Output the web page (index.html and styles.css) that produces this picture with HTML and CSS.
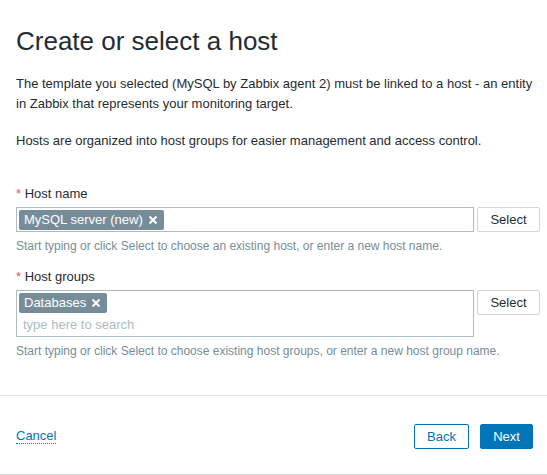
FILE: index.html
```html
<!DOCTYPE html>
<html lang="en">
<head>
<meta charset="utf-8">
<title>Create or select a host</title>
<link rel="stylesheet" href="styles.css">
</head>
<body>
<div class="dialog">
  <div class="content">
    <h1 class="title">Create or select a host</h1>
    <p class="text">The template you selected (MySQL by Zabbix agent 2) must be linked to a host - an entity in Zabbix that represents your monitoring target.</p>
    <p class="text">Hosts are organized into host groups for easier management and access control.</p>

    <div class="field field-first">
      <label class="label"><span class="req">*</span> Host name</label>
      <div class="row">
        <div class="ms ms-single">
          <span class="tag">MySQL server (new)<svg class="tag-x" viewBox="0 0 10 10" width="10" height="10"><path d="M1.5 1.5L8.5 8.5M8.5 1.5L1.5 8.5" stroke="#fff" stroke-width="2"/></svg></span>
        </div>
        <button class="btn-sec" type="button">Select</button>
      </div>
      <div class="hint">Start typing or click Select to choose an existing host, or enter a new host name.</div>
    </div>

    <div class="field">
      <label class="label"><span class="req">*</span> Host groups</label>
      <div class="row">
        <div class="ms ms-multi">
          <div class="tags"><span class="tag">Databases<svg class="tag-x" viewBox="0 0 10 10" width="10" height="10"><path d="M1.5 1.5L8.5 8.5M8.5 1.5L1.5 8.5" stroke="#fff" stroke-width="2"/></svg></span></div>
          <input class="ms-input" type="text" placeholder="type here to search">
        </div>
        <button class="btn-sec" type="button">Select</button>
      </div>
      <div class="hint">Start typing or click Select to choose existing host groups, or enter a new host group name.</div>
    </div>
  </div>
  <div class="footer">
    <a class="link" href="#">Cancel</a>
    <div class="actions">
      <button class="btn-alt" type="button">Back</button>
      <button class="btn-main" type="button">Next</button>
    </div>
  </div>
</div>
</body>
</html>
```
FILE: styles.css
```css
* { box-sizing: border-box; }
html, body { margin: 0; padding: 0; background: #fff; }
body {
  font-family: "Liberation Sans", Arial, sans-serif;
  font-size: 13px;
  color: #1f2c33;
  width: 547px;
  height: 475px;
  overflow: hidden;
}
.dialog {
  height: 475px;
  display: flex;
  flex-direction: column;
}
.content {
  padding: 26px 7px 0 16px;
  height: 395px;
  flex: none;
}
.title {
  margin: 0 0 18px;
  font-size: 26px;
  line-height: 30px;
  font-weight: normal;
  color: #1f2c33;
}
.text {
  margin: 0 0 17px;
  line-height: 20px;
}
.field { margin-bottom: 14px; }
.field-first { margin-top: 34px; }
.label {
  display: block;
  line-height: 18px;
  margin-bottom: 4px;
}
.req { color: #e45959; }
.row {
  display: flex;
  align-items: flex-start;
  gap: 3px;
}
.ms {
  flex: 1;
  border: 1px solid #acbbc2;
  background: #fff;
}
.ms-single {
  height: 25px;
  padding: 2px 2px 1px;
  display: flex;
  align-items: center;
}
.ms-multi {
  height: 47px;
  padding: 2px 2px 0;
}
.tags { display: flex; }
.tag {
  display: inline-flex;
  align-items: center;
  height: 20px;
  padding: 0 6px 0 5px;
  background: #768d99;
  color: #fff;
  border-radius: 2px;
  font-size: 13px;
  line-height: 20px;
}
.tag-x { margin-left: 5px; }
.ms-input {
  display: block;
  width: 100%;
  border: 0;
  outline: none;
  padding: 0 0 0 4px;
  height: 23px;
  font-family: inherit;
  font-size: 13px;
  color: #1f2c33;
  background: transparent;
}
.ms-input::placeholder { color: #acbbc2; opacity: 1; }
.btn-sec {
  width: 63px;
  height: 25px;
  border: 1px solid #cfd7db;
  border-radius: 2px;
  background: #fff;
  color: #1f2c33;
  font-family: inherit;
  font-size: 13px;
  padding: 0;
}
.hint {
  margin-top: 6px;
  font-size: 12px;
  line-height: 16px;
  color: #768d99;
}
.footer {
  flex: none;
  height: 80px;
  border-top: 1px solid #e3e3e3;
  border-bottom: 1px solid #ccd5d9;
  display: flex;
  align-items: center;
  justify-content: space-between;
  padding: 2px 14px 0 16px;
}
.link {
  color: #0275b8;
  text-decoration: none;
  border-bottom: 1px dotted #0275b8;
  line-height: 15px;
}
.actions { display: flex; gap: 11px; }
.btn-alt, .btn-main {
  height: 25px;
  border-radius: 2px;
  font-family: inherit;
  font-size: 13px;
  padding: 0;
}
.btn-alt {
  width: 55px;
  border: 1px solid #0275b8;
  background: #fff;
  color: #0275b8;
}
.btn-main {
  width: 53px;
  border: 1px solid #0275b8;
  background: #0275b8;
  color: #fff;
}
```
